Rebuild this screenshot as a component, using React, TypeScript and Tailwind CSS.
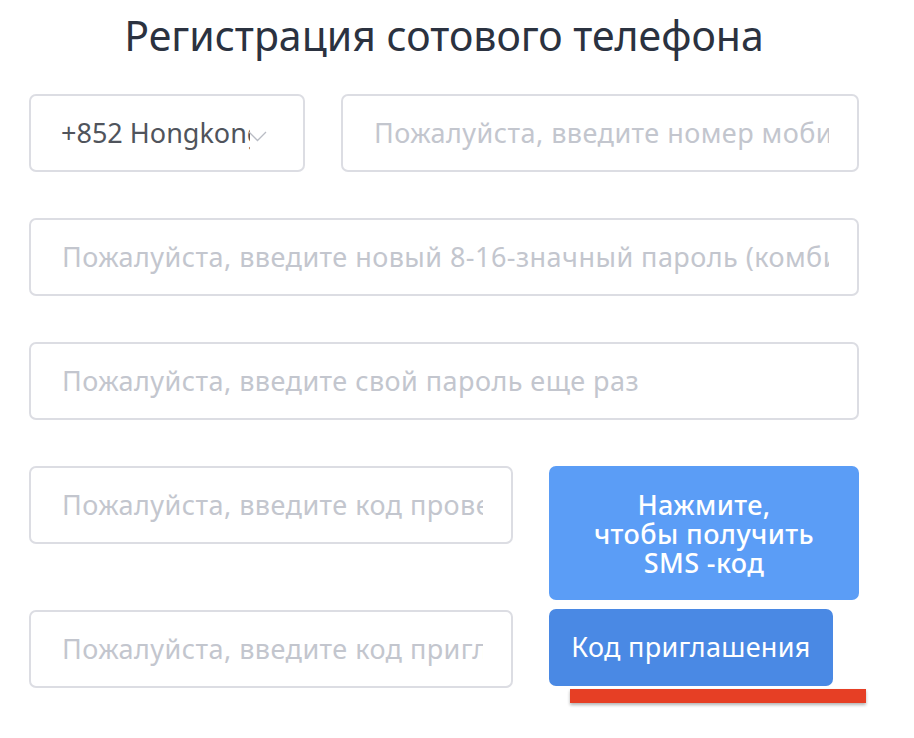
const font = { fontFamily: '"Noto Sans", "Open Sans", sans-serif' };

function Field({ placeholder, className }: { placeholder: string; className?: string }) {
  return (
    <div
      className={
        "h-[78px] border-2 border-[#dcdde3] rounded-[7px] flex items-center pl-[31px] pr-[28px] overflow-hidden bg-white " +
        (className ?? "")
      }
    >
      <span className="text-[27px] text-[#c3c6ce] whitespace-nowrap overflow-hidden tracking-[0.45px]">
        {placeholder}
      </span>
    </div>
  );
}

export default function App() {
  return (
    <div className="w-[914px] h-[738px] bg-white overflow-hidden" style={font}>
      <div className="pl-[29px] w-[859px]">
        <h1 className="text-center text-[41px] leading-none text-[#2b3240] pt-[15px]">
          Регистрация сотового телефона
        </h1>

        <div className="flex gap-[36px] mt-[38px]">
          <div className="relative w-[276px] h-[78px] border-2 border-[#dcdde3] rounded-[7px] flex items-center pl-[30px] bg-white">
            <span className="text-[27px] text-[#50545c] whitespace-nowrap overflow-hidden w-[189px]">
              +852 Hongkong
            </span>
            <svg
              className="absolute left-[217px] top-[35px]"
              width="19"
              height="11"
              viewBox="0 0 19 11"
              fill="none"
              stroke="#b9bcc4"
              strokeWidth="1.3"
            >
              <polyline points="1,1 9.5,9.5 18,1" />
            </svg>
          </div>
          <Field className="flex-1" placeholder="Пожалуйста, введите номер мобильного телефона" />
        </div>

        <Field className="mt-[46px]" placeholder="Пожалуйста, введите новый 8-16-значный пароль (комбинация букв и цифр)" />
        <Field className="mt-[46px]" placeholder="Пожалуйста, введите свой пароль еще раз" />

        <div className="flex gap-[36px] mt-[46px] items-start">
          <Field className="w-[484px] shrink-0" placeholder="Пожалуйста, введите код проверки" />
          <button className="flex-1 h-[134px] rounded-[7px] bg-[#5b9df6] text-white text-[27px] leading-[29px] font-medium tracking-[0.4px] flex items-center justify-center text-center">
            Нажмите,
            <br />
            чтобы получить
            <br />
            SMS -код
          </button>
        </div>

        <div className="flex gap-[36px] mt-[10px] items-start">
          <Field className="w-[484px] shrink-0" placeholder="Пожалуйста, введите код приглашения" />
          <div className="flex flex-col">
            <button className="w-[284px] h-[77px] -mt-[1px] rounded-[7px] bg-[#4a89e4] text-white text-[27px] tracking-[0.3px]">
              Код приглашения
            </button>
            <div className="ml-[21px] mt-[3px] w-[296px] h-[14px] bg-[#e63f25] shadow-[0_2px_3px_rgba(0,0,0,0.3)]" />
          </div>
        </div>
      </div>
    </div>
  );
}
